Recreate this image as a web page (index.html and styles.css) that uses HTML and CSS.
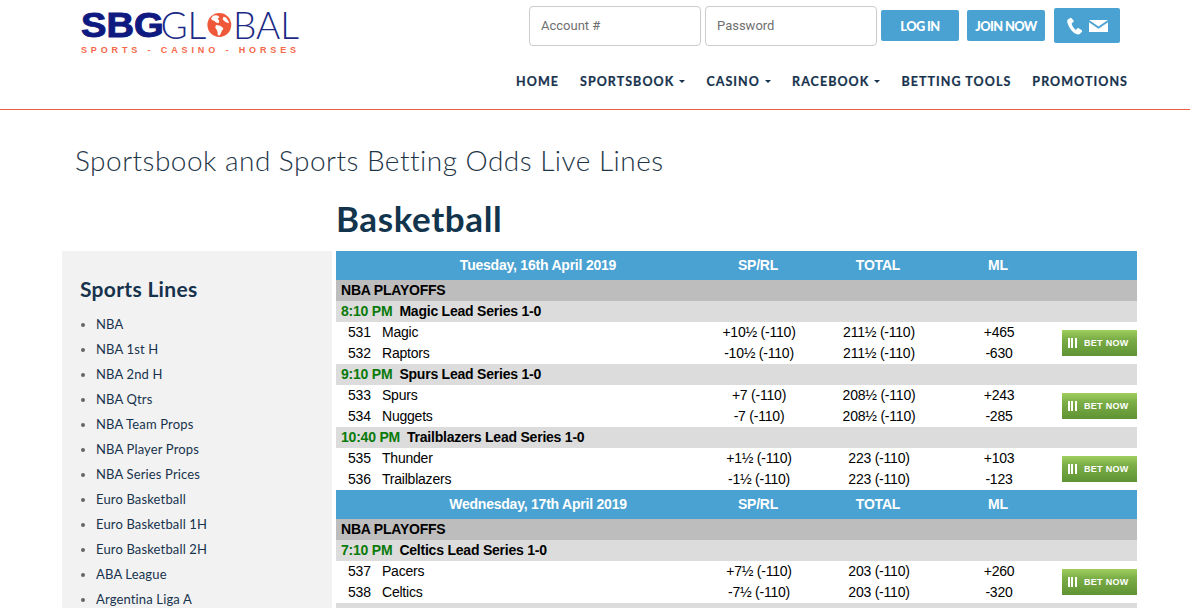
FILE: index.html
```html
<!DOCTYPE html>
<html lang="en">
<head>
<meta charset="utf-8">
<title>Sportsbook and Sports Betting Odds Live Lines</title>
<link rel="stylesheet" href="styles.css">
</head>
<body>
<header class="site-header">
  <div class="top-row">
    <a class="logo" href="#">
      <span class="logo-main"><b>SBG</b><span class="logo-thin">GL</span><svg class="globe" viewBox="0 0 30 30" aria-hidden="true"><circle cx="15" cy="15" r="14.5" fill="#f0583a"/><path d="M7 4c2-1 5-1 7 0l1 2-2 1 2 3-1 3-3-1-2-2-3-1-1-2zM11 15l5 1 3 2 1 2-2 2-1 3-2 3-2-1v-3l-1-3-2-3zM20 5l3 1 3 4 1 3-3-1-2-1-3-3z" fill="#fff"/></svg><span class="logo-thin">BAL</span></span>
      <span class="logo-sub">SPORTS - CASINO - HORSES</span>
    </a>
    <form class="login">
      <input class="field" type="text" placeholder="Account #">
      <input class="field" type="password" placeholder="Password">
      <button class="btn" type="button">LOG IN</button>
      <button class="btn" type="button">JOIN NOW</button>
      <a class="contact" href="#" aria-label="Contact">
        <svg width="17" height="18" viewBox="0 0 17 18" aria-hidden="true"><path d="M3.2 1 .8 2.600C.2 3.200 0 4.400.5 6c1.300 4.200 4.700 9.300 8.800 11 1.600.7 3 .4 3.700-.3l2-2c.4-.5.300-1-.2-1.400l-3-2.100c-.5-.3-1-.3-1.400.1l-1 1.100c-.4.300-.8.300-1.200 0-1.500-1.300-2.900-3.500-3.500-5.400-.1-.5 0-.9.400-1.100l1.200-.8c.5-.3.600-.8.400-1.300L4.800 1.400C4.500.8 3.800.6 3.200 1z" fill="#fff"/></svg>
        <svg width="19" height="12" viewBox="0 0 19 12" aria-hidden="true"><path d="M0 0h19L9.500 6.500zM0 2.300V12h19V2.300L9.500 8.800z" fill="#fff"/></svg>
      </a>
    </form>
  </div>
  <nav class="main-nav">
    <a href="#">HOME</a>
    <a href="#">SPORTSBOOK <i class="caret"></i></a>
    <a href="#">CASINO <i class="caret"></i></a>
    <a href="#">RACEBOOK <i class="caret"></i></a>
    <a href="#">BETTING TOOLS</a>
    <a href="#">PROMOTIONS</a>
  </nav>
</header>
<main class="page">
  <h1 class="page-title">Sportsbook and Sports Betting Odds Live Lines</h1>
  <h2 class="sport-title">Basketball</h2>
  <div class="columns">
    <aside class="sidebar">
      <h3>Sports Lines</h3>
      <ul>
        <li>NBA</li><li>NBA 1st H</li><li>NBA 2nd H</li><li>NBA Qtrs</li><li>NBA Team Props</li><li>NBA Player Props</li><li>NBA Series Prices</li><li>Euro Basketball</li><li>Euro Basketball 1H</li><li>Euro Basketball 2H</li><li>ABA League</li><li>Argentina Liga A</li>
      </ul>
    </aside>
    <table class="lines">
      <colgroup><col class="c-team"><col class="c-odds"><col class="c-odds"><col class="c-odds"><col class="c-bet"></colgroup>
      <tbody>
        <tr class="day"><th class="date">Tuesday, 16th April 2019</th><th>SP/RL</th><th>TOTAL</th><th>ML</th><th></th></tr>
        <tr class="league"><td colspan="5">NBA PLAYOFFS</td></tr>
        <tr class="game-head"><td colspan="5"><span class="time">8:10 PM</span>Magic Lead Series 1-0</td></tr>
        <tr><td class="team"><span class="num">531</span>Magic</td><td>+10½ (-110)</td><td>211½ (-110)</td><td>+465</td><td class="bet" rowspan="2"><a class="bet-now" href="#"><i class="bars"></i>BET NOW</a></td></tr>
        <tr><td class="team"><span class="num">532</span>Raptors</td><td>-10½ (-110)</td><td>211½ (-110)</td><td>-630</td></tr>
        <tr class="game-head"><td colspan="5"><span class="time">9:10 PM</span>Spurs Lead Series 1-0</td></tr>
        <tr><td class="team"><span class="num">533</span>Spurs</td><td>+7 (-110)</td><td>208½ (-110)</td><td>+243</td><td class="bet" rowspan="2"><a class="bet-now" href="#"><i class="bars"></i>BET NOW</a></td></tr>
        <tr><td class="team"><span class="num">534</span>Nuggets</td><td>-7 (-110)</td><td>208½ (-110)</td><td>-285</td></tr>
        <tr class="game-head"><td colspan="5"><span class="time">10:40 PM</span>Trailblazers Lead Series 1-0</td></tr>
        <tr><td class="team"><span class="num">535</span>Thunder</td><td>+1½ (-110)</td><td>223 (-110)</td><td>+103</td><td class="bet" rowspan="2"><a class="bet-now" href="#"><i class="bars"></i>BET NOW</a></td></tr>
        <tr><td class="team"><span class="num">536</span>Trailblazers</td><td>-1½ (-110)</td><td>223 (-110)</td><td>-123</td></tr>
        <tr class="day"><th class="date">Wednesday, 17th April 2019</th><th>SP/RL</th><th>TOTAL</th><th>ML</th><th></th></tr>
        <tr class="league"><td colspan="5">NBA PLAYOFFS</td></tr>
        <tr class="game-head"><td colspan="5"><span class="time">7:10 PM</span>Celtics Lead Series 1-0</td></tr>
        <tr><td class="team"><span class="num">537</span>Pacers</td><td>+7½ (-110)</td><td>203 (-110)</td><td>+260</td><td class="bet" rowspan="2"><a class="bet-now" href="#"><i class="bars"></i>BET NOW</a></td></tr>
        <tr><td class="team"><span class="num">538</span>Celtics</td><td>-7½ (-110)</td><td>203 (-110)</td><td>-320</td></tr>
        <tr class="game-head"><td colspan="5">&nbsp;</td></tr>
      </tbody>
    </table>
  </div>
</main>
</body>
</html>
```
FILE: styles.css
```css
* { box-sizing: border-box; }
html, body { margin: 0; padding: 0; }
body { background: #fff; color: #000; font-family: "Liberation Sans", Arial, sans-serif; height: 608px; overflow: hidden; }
a { text-decoration: none; color: inherit; }

.site-header { height: 110px; border-bottom: 1px solid #ee5f48; padding: 6px 62px 0 81px; }
.top-row { display: flex; justify-content: space-between; align-items: flex-start; padding-right: 8px; }
.logo { display: block; width: 218px; }
.logo-main { display: flex; align-items: center; height: 38px; color: #0f1a80; }
.logo-main b { display: inline-block; width: 87px; font-size: 35px; line-height: 38px; transform: scaleX(1.09); transform-origin: left center; -webkit-text-stroke: 1px #0f1a80; white-space: nowrap; }
.logo-thin { font-family: "Lato", sans-serif; font-weight: 300; font-size: 37px; line-height: 38px; color: #1b2a86; }
.globe { width: 27px; height: 28px; margin: 0 1px; }
.logo-sub { display: block; margin-top: 1px; font-size: 9px; font-weight: 700; letter-spacing: 3.87px; color: #f4694a; white-space: nowrap; line-height: 11px; }

.login { display: flex; align-items: flex-start; gap: 4px; }
.field { width: 172px; height: 40px; border: 1px solid #ccc; border-radius: 4px; padding: 0 11px 2px; font: 13px/20px "Roboto", sans-serif; background: #fff; }
.field::placeholder { color: #6f6f6f; opacity: 1; }
.btn { height: 31px; margin: 4px 4px 0 0; width: 78px; border: 0; border-radius: 2px; background: #4aa2d2; color: #fff; font: 900 12.800px/30px "Lato", sans-serif; letter-spacing: -.6px; padding: 0; }
.btn + .btn { margin-right: 5px; }
.contact { display: flex; align-items: center; justify-content: center; gap: 5px; width: 66px; height: 35px; margin-top: 2px; background: #4aa2d2; border-radius: 2px; }

.main-nav { display: flex; justify-content: flex-end; gap: 21px; margin-top: 16px; font: 700 12.500px/20px "Lato", sans-serif; letter-spacing: 1.05px; -webkit-text-stroke: .2px #17324d; color: #17324d; }
.caret { display: inline-block; width: 0; height: 0; margin: 0 0 2px 1px; vertical-align: middle; border-top: 3px solid #17324d; border-left: 3px solid transparent; border-right: 3px solid transparent; }

.page { padding: 0 53px 0 62px; }
.page-title { margin: 33px 0 0 13px; font: 300 28px/34px "Lato", sans-serif; letter-spacing: .48px; color: #1d3547; }
.sport-title { margin: 21px 0 0 274px; font: 700 35px/40px "Lato", sans-serif; letter-spacing: .6px; color: #12344c; }
.columns { display: flex; gap: 4px; margin-top: 13px; align-items: stretch; }

.sidebar { flex: 0 0 270px; background: #f2f2f2; padding: 24px 18px 0; height: 400px; }
.sidebar h3 { margin: 0; font: 700 21px/28px "Lato", sans-serif; letter-spacing: .3px; color: #17324d; }
.sidebar ul { margin: 9px 0 0; padding: 0 0 0 16px; font: 400 13px/25px "Lato", sans-serif; letter-spacing: .15px; color: #17324d; }
.sidebar li { height: 25px; }
.sidebar li::marker { color: #666; }

.lines { flex: 0 0 801px; width: 801px; table-layout: fixed; border-collapse: collapse; font-size: 14px; line-height: 21px; letter-spacing: -.22px; align-self: flex-start; }
.c-team { width: 362px; }
.c-odds { width: 120px; }
.c-bet { width: 79px; }
.lines th, .lines td { padding: 0; text-align: center; height: 21px; }
.lines td { padding-left: 2px; }
.day { background: #4aa2d2; color: #fff; }
.day th { height: 29px; font-weight: 700; }
.lines .date { padding-left: 42px; }
.league { background: #bdbdbd; font-weight: 700; }
.lines .league td, .lines .game-head td { text-align: left; padding-left: 5px; }
.game-head { background: #dcdcdc; font-weight: 700; }
.time { color: #0a7a0a; margin-right: 7px; }
.lines .team { text-align: left; padding-left: 12px; }
.num { display: inline-block; width: 34px; }
.lines .bet { text-align: right; vertical-align: top; padding: 8px 0 0; }
.bet-now { display: flex; align-items: center; width: 75px; height: 26px; margin-left: auto; padding-left: 6px; background: linear-gradient(#a0cf5f, #7bae47 35%, #5f9334); color: #fff; font: 700 9px/26px "Liberation Sans", sans-serif; letter-spacing: .3px; }
.bars { width: 9px; height: 10px; margin-right: 7px; background: repeating-linear-gradient(90deg, #fff 0 2px, transparent 2px 3.500px); }
```
